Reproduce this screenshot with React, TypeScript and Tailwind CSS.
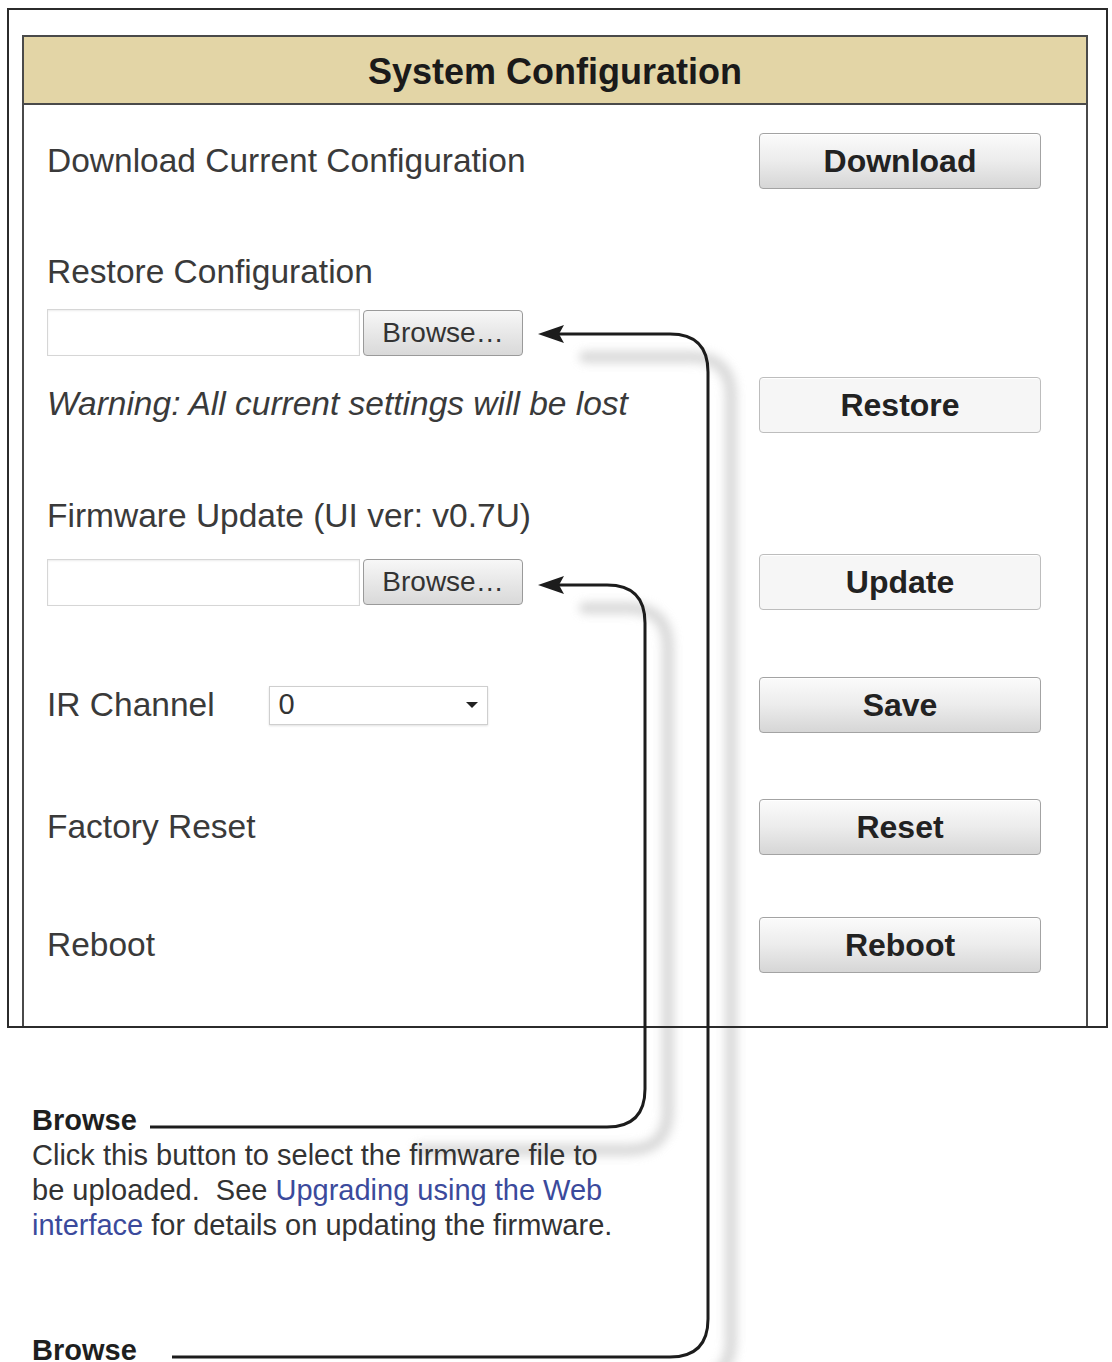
import React from 'react';

const font = { fontFamily: '"Liberation Sans", Arial, sans-serif' };

const ActionButton = ({ label, flat }: { label: string; flat?: boolean }) => (
  <button
    className={`w-[282px] h-[56px] rounded-[4px] border text-[32px] font-bold text-[#222] shadow-[inset_0_1px_0_#fff] ${
      flat ? 'bg-[#f6f6f6] border-[#bdbdbd]' : 'bg-gradient-to-b from-[#fbfbfb] via-[#ececec] to-[#d6d6d6] border-[#a3a3a3]'
    }`}
  >
    {label}
  </button>
);

const FileInput = () => (
  <div className="flex items-center">
    <div className="w-[313px] h-[47px] border border-[#d6d6d6] bg-white shadow-[inset_0_1px_2px_rgba(0,0,0,0.08)]" />
    <button className="ml-[3px] w-[160px] h-[46px] rounded-[4px] border border-[#9a9a9a] bg-gradient-to-b from-[#f7f7f7] to-[#d9d9d9] text-[28px] text-[#333]">
      Browse…
    </button>
  </div>
);

// soft drop shadows of the callout lines, painted under the page content
const CalloutShadows = () => (
  <svg className="absolute left-0 top-0 z-0 pointer-events-none" width="1112" height="1362" viewBox="0 0 1112 1362">
    <defs>
      <filter id="soft" x="-20%" y="-20%" width="140%" height="140%">
        <feGaussianBlur stdDeviation="5" />
      </filter>
    </defs>
    <g filter="url(#soft)" stroke="#cdcdcd" strokeWidth="12" fill="none" strokeLinecap="round" opacity="0.75">
      <path d="M 420 1150 H 628 Q 668 1150 668 1110 V 648 Q 668 608 628 608 H 585" />
      <path d="M 700 1380 H 691 Q 731 1380 731 1340 V 397 Q 731 357 691 357 H 585" />
    </g>
  </svg>
);

const CalloutLines = () => (
  <svg className="absolute left-0 top-0 z-20 pointer-events-none" width="1112" height="1362" viewBox="0 0 1112 1362">
    <g stroke="#1c1c1c" strokeWidth="3" fill="none">
      <path d="M 150 1127 H 607 Q 645 1127 645 1089 V 623 Q 645 585 607 585 H 556" />
      <path d="M 172 1357 H 670 Q 708 1357 708 1319 V 372 Q 708 334 670 334 H 556" />
    </g>
    <g fill="#1c1c1c">
      <path d="M 538 585 L 564 576 L 559 585 L 564 594 Z" />
      <path d="M 538 334 L 564 325 L 559 334 L 564 343 Z" />
    </g>
  </svg>
);

export default function App() {
  return (
    <div className="relative w-[1112px] h-[1362px] bg-white overflow-hidden" style={font}>
      <CalloutShadows />

      <div className="relative z-10">
        <div className="ml-[7px] mt-[8px] w-[1101px] h-[1020px] border-2 border-[#2b2b2b] overflow-hidden">
          <div className="ml-[13px] mt-[25px] w-[1066px] h-[1100px] border-2 border-[#4a4a4a]">
            <div className="h-[68px] pt-[4px] bg-[#e3d5a6] border-b-2 border-[#4a4a4a] flex items-center justify-center">
              <span className="text-[36px] font-bold text-[#1a1a1a]">System Configuration</span>
            </div>

            <div className="pl-[23px] pr-[45px] text-[33.5px] text-[#3a3a3a]">
              <div className="mt-[28px] h-[56px] flex items-center justify-between">
                <span>Download Current Configuration</span>
                <ActionButton label="Download" />
              </div>

              <div className="mt-[64px] h-[38px] flex items-center">Restore Configuration</div>
              <div className="mt-[18px]">
                <FileInput />
              </div>
              <div className="mt-[20px] h-[57px] flex items-center justify-between">
                <span className="italic">Warning: All current settings will be lost</span>
                <ActionButton label="Restore" flat />
              </div>

              <div className="mt-[64px] h-[38px] flex items-center">Firmware Update (UI ver: v0.7U)</div>
              <div className="mt-[19px] h-[56px] flex items-center justify-between">
                <FileInput />
                <ActionButton label="Update" flat />
              </div>

              <div className="mt-[67px] h-[56px] flex items-center justify-between">
                <div className="flex items-center">
                  <span>IR Channel</span>
                  <div className="ml-[54px] w-[219px] h-[39px] border border-[#cfcfcf] bg-white shadow-[0_1px_2px_rgba(0,0,0,0.12)] flex items-center justify-between pl-[9px] pr-[9px]">
                    <span className="text-[29px] text-[#333]">0</span>
                    <span className="w-0 h-0 border-l-[6px] border-r-[6px] border-t-[6px] border-l-transparent border-r-transparent border-t-[#222]" />
                  </div>
                </div>
                <ActionButton label="Save" />
              </div>

              <div className="mt-[66px] h-[56px] flex items-center justify-between">
                <span>Factory Reset</span>
                <ActionButton label="Reset" />
              </div>

              <div className="mt-[62px] h-[56px] flex items-center justify-between">
                <span>Reboot</span>
                <ActionButton label="Reboot" />
              </div>
            </div>
          </div>
        </div>

        <div className="pl-[32px] text-[29px] text-[#333]">
          <div className="mt-[76px] h-[34px] flex items-center text-[29px] font-bold text-[#1f1f1f]">Browse</div>
          <p className="leading-[35px] whitespace-nowrap">
            Click this button to select the firmware file to
            <br />
            be uploaded.&nbsp; See <span className="text-[#3b4a9c]">Upgrading using the Web</span>
            <br />
            <span className="text-[#3b4a9c]">interface</span> for details on updating the firmware.
          </p>
          <div className="mt-[91px] h-[34px] flex items-center text-[29px] font-bold text-[#1f1f1f]">Browse</div>
        </div>
      </div>

      <CalloutLines />
    </div>
  );
}
